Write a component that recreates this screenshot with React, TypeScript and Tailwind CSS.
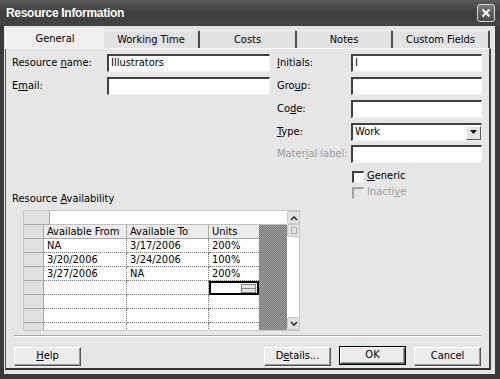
import React from "react";

const font = "font-['DejaVu_Sans_Condensed','Liberation_Sans',sans-serif]";

function U({ children }: { children: React.ReactNode }) {
  return <span className="underline underline-offset-[1px]">{children}</span>;
}

function Input({ w, value, h = 18 }: { w: number; value?: string; h?: number }) {
  return (
    <div
      className="bg-white border-t-[2px] border-l-[2px] border-t-[#404040] border-l-[#404040] border-b border-r border-b-[#f4f4f4] border-r-[#f4f4f4] flex items-center pl-[2px] text-[11px] text-black"
      style={{ width: w, height: h }}
    >
      {value}
    </div>
  );
}

function Btn({ children, def }: { children: React.ReactNode; def?: boolean }) {
  const inner = (
    <div className="h-full w-full bg-[#ececec] border border-t-white border-l-white border-b-[#555] border-r-[#555] shadow-[inset_-1px_-1px_0_#9a9a9a] flex items-center justify-center text-[11px] text-black">
      {children}
    </div>
  );
  return def ? (
    <div className="w-[67px] h-[19px] border border-black">{inner}</div>
  ) : (
    <div className="w-[67px] h-[19px]">{inner}</div>
  );
}

function Tab({ label, w, selected }: { label: string; w: number; selected?: boolean }) {
  if (selected)
    return (
      <div
        className="h-[21px] bg-[#efefef] border-t border-l border-t-[#fafafa] border-l-[#fafafa] rounded-t-[3px] flex items-center justify-center text-[11px] text-black relative z-10 -mb-[1px]"
        style={{ width: w }}
      >
        {label}
      </div>
    );
  return (
    <div
      className="h-[18px] bg-[#e2e2e2] border-t border-t-[#f4f4f4] border-r-[2px] border-r-[#4a4a4a] rounded-tr-[2px] flex items-center justify-center text-[11px] text-black pt-[1px]"
      style={{ width: w }}
    >
      {label}
    </div>
  );
}

const checker =
  "bg-[repeating-conic-gradient(#7c7c7c_0_25%,#9c9c9c_0_50%)] bg-[length:2px_2px]";

function ScrollBtn({ up }: { up?: boolean }) {
  return (
    <div className="w-[14px] h-[13px] bg-[#e2e2e2] border border-[#c8c8c8] rounded-[2px] flex items-center justify-center">
      <svg width="8" height="6" viewBox="0 0 8 6">
        <path
          d={up ? "M1 5 L4 2 L7 5" : "M1 1 L4 4 L7 1"}
          stroke="#333"
          strokeWidth="1.6"
          fill="none"
        />
      </svg>
    </div>
  );
}

const rows: [string, string, string][] = [
  ["NA", "3/17/2006", "200%"],
  ["3/20/2006", "3/24/2006", "100%"],
  ["3/27/2006", "NA", "200%"],
  ["", "", ""],
  ["", "", ""],
  ["", "", ""],
  ["", "", ""],
];

function Grid() {
  return (
    <div className="ml-[17px] mt-[5px] w-[277px] h-[121px] flex border border-[#c8c8c8] bg-white overflow-hidden">
      <div className="w-[263px] flex flex-col">
        <div className="h-[14px] flex shrink-0">
          <div className="w-[26px] bg-[#e0e0e0] border-r border-b border-[#a8a8a8]" />
          <div className="flex-1 bg-white border-b border-[#c0c0c0]" />
        </div>
        <div className="flex flex-1">
          <div className="flex flex-col">
            <div className="h-[14px] flex shrink-0 text-[11px] text-black">
              <div className="w-[20px] bg-[#e0e0e0] border-r border-b border-[#a8a8a8]" />
              <div className="w-[83px] bg-[#ececec] border-r border-b border-[#a8a8a8] pl-[3px] leading-[13px]">Available From</div>
              <div className="w-[82px] bg-[#ececec] border-r border-b border-[#a8a8a8] pl-[3px] leading-[13px]">Available To</div>
              <div className="w-[50px] bg-[#ececec] border-b border-[#a8a8a8] pl-[3px] leading-[13px]">Units</div>
            </div>
            {rows.map((r, i) => (
              <div key={i} className="h-[14px] flex shrink-0 text-[11px] text-black">
                <div className="w-[20px] bg-[#e0e0e0] border-r border-b border-[#a8a8a8]" />
                <div className="w-[83px] border-r border-b border-dotted border-[#777] pl-[3px] leading-[13px]">{r[0]}</div>
                <div className="w-[82px] border-r border-b border-dotted border-[#777] pl-[3px] leading-[13px]">{r[1]}</div>
                {i === 3 ? (
                  <div className="w-[50px] border-[2px] border-black flex justify-end items-center pr-[1px]">
                    <div className="flex flex-col w-[15px]">
                      <div className="h-[5px] bg-[#e4e4e4] border border-[#888]" />
                      <div className="h-[5px] bg-[#e4e4e4] border border-[#888] -mt-[1px]" />
                    </div>
                  </div>
                ) : (
                  <div className="w-[50px] border-b border-dotted border-[#777] pl-[3px] leading-[13px]">{r[2]}</div>
                )}
              </div>
            ))}
          </div>
          <div className={`w-[28px] ${checker}`} />
        </div>
      </div>
      <div className="w-[14px] flex flex-col bg-white">
        <ScrollBtn up />
        <div className="w-[14px] h-[13px] bg-[#e2e2e2] border border-[#c8c8c8] rounded-[2px] flex items-center justify-center">
          <div className="w-[6px] h-[7px] border border-[#b0b0b0]" />
        </div>
        <div className="flex-1" />
        <ScrollBtn />
      </div>
    </div>
  );
}

function CheckRow({ label, disabled }: { label: React.ReactNode; disabled?: boolean }) {
  return (
    <div className="flex items-center h-[15px]">
      <div
        className={`w-[12px] h-[12px] border-t-[2px] border-l-[2px] border-b border-r ${
          disabled
            ? "border-t-[#a0a0a0] border-l-[#a0a0a0] border-b-[#f0f0f0] border-r-[#f0f0f0] bg-[#e6e6e6]"
            : "border-t-[#404040] border-l-[#404040] border-b-[#f4f4f4] border-r-[#f4f4f4] bg-white"
        }`}
      />
      <span className={`ml-[3px] text-[11px] ${disabled ? "text-[#a0a0a0]" : "text-black"}`}>{label}</span>
    </div>
  );
}

export default function App() {
  return (
    <div className={`w-[500px] h-[379px] bg-[#3a3a3a] flex flex-col overflow-hidden ${font}`}>
      {/* Title bar */}
      <div className="h-[26px] shrink-0 bg-gradient-to-b from-[#5a5a5a] via-[#3e3e3e] to-[#444] flex items-center pl-[6px] pr-[5px]">
        <span className="text-white font-bold text-[12px] font-['Liberation_Sans',sans-serif] tracking-[-0.3px]">
          Resource Information
        </span>
        <div className="ml-auto w-[18px] h-[18px] rounded-[3px] border border-[#d8d8d8] bg-gradient-to-b from-[#7a7a7a] to-[#4a4a4a] flex items-center justify-center">
          <svg width="10" height="10" viewBox="0 0 10 10">
            <path d="M1.5 1.5 L8.5 8.5 M8.5 1.5 L1.5 8.5" stroke="white" strokeWidth="2" />
          </svg>
        </div>
      </div>

      {/* Body */}
      <div className="flex-1 ml-[4px] mr-[5px] mb-[5px] bg-[#e4e4e4] flex flex-col">
        {/* Tabs */}
        <div className="h-[22px] shrink-0 flex items-end pl-[1px]">
          <Tab label="General" w={99} selected />
          <Tab label="Working Time" w={96} />
          <Tab label="Costs" w={97} />
          <Tab label="Notes" w={96} />
          <Tab label="Custom Fields" w={97} />
        </div>

        {/* Panel */}
        <div className="flex-1 ml-[1px] mr-[4px] mb-[4px] bg-[#e6e6e6] border-t border-t-[#fafafa] border-l border-l-[#555] border-r-[2px] border-r-[#444] border-b-[2px] border-b-[#333] flex flex-col">
          <div className="flex pt-[5px]">
            {/* left column */}
            <div className="flex flex-col gap-[5px] pl-[6px]">
              <div className="flex items-center h-[18px]">
                <span className="w-[95px] text-[11px] text-black">
                  Resource <U>n</U>ame:
                </span>
                <Input w={163} value="Illustrators" />
              </div>
              <div className="flex items-center h-[18px]">
                <span className="w-[95px] text-[11px] text-black">
                  E<U>m</U>ail:
                </span>
                <Input w={163} />
              </div>
            </div>
            {/* right column */}
            <div className="flex flex-col pl-[7px]">
              {[
                [<><U>I</U>nitials:</>, "I"],
                [<>Gro<U>u</U>p:</>, ""],
                [<>Co<U>d</U>e:</>, ""],
              ].map(([l, v], i) => (
                <div key={i} className="flex items-center h-[18px] mb-[5px]">
                  <span className="w-[74px] text-[11px] text-black">{l}</span>
                  <Input w={131} value={v as string} />
                </div>
              ))}
              <div className="flex items-center h-[18px] mb-[4px]">
                <span className="w-[74px] text-[11px] text-black">
                  <U>T</U>ype:
                </span>
                <div className="w-[131px] h-[18px] bg-white border-t-[2px] border-l-[2px] border-t-[#404040] border-l-[#404040] border-b border-r border-b-[#f4f4f4] border-r-[#f4f4f4] flex items-center pl-[2px] text-[11px] text-black">
                  Work
                  <div className="ml-auto w-[15px] h-[14px] bg-[#e4e4e4] border border-t-white border-l-white border-b-[#555] border-r-[#555] flex items-center justify-center">
                    <svg width="7" height="5" viewBox="0 0 7 5">
                      <path d="M0 0 H7 L3.5 4 Z" fill="#111" />
                    </svg>
                  </div>
                </div>
              </div>
              <div className="flex items-center h-[18px] mb-[6px]">
                <span className="w-[74px] text-[11px] text-[#9a9a9a]">
                  Mater<U>i</U>al label:
                </span>
                <Input w={131} />
              </div>
              <div className="pl-[75px] flex flex-col gap-[1px]">
                <CheckRow label={<><U>G</U>eneric</>} />
                <CheckRow label={<>Inacti<U>v</U>e</>} disabled />
              </div>
            </div>
          </div>

          {/* Resource Availability */}
          <div className="-mt-[8px] pl-[6px] text-[11px] text-black leading-[13px]">
            Resource <U>A</U>vailability
          </div>
          <Grid />

          <div className="mt-[4px] ml-[8px] mr-[8px] h-[2px] border-t border-t-[#a8a8a8] border-b border-b-white" />

          <div className="flex mt-[10px] pl-[8px] pr-[8px]">
            <Btn>
              <U>H</U>elp
            </Btn>
            <div className="ml-auto flex gap-[8px]">
              <Btn>
                D<U>e</U>tails...
              </Btn>
              <div className="-mt-[1px] -mb-[1px]">
                <Btn def>OK</Btn>
              </div>
              <Btn>Cancel</Btn>
            </div>
          </div>
        </div>
      </div>
    </div>
  );
}
